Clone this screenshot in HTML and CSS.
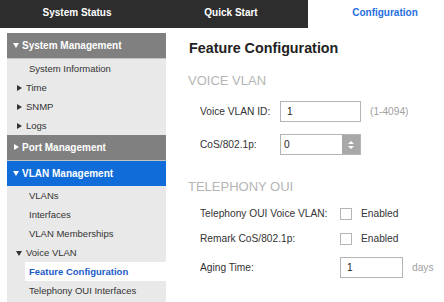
FILE: index.html
```html
<!DOCTYPE html>
<html lang="en">
<head>
  <meta charset="UTF-8">
  <title>Feature Configuration</title>
  <link rel="stylesheet" href="styles.css">
</head>
<body>
  <nav class="topbar">
    <div class="tab">System Status</div>
    <div class="tab">Quick Start</div>
    <div class="tab active">Configuration</div>
  </nav>
  <div class="main">
    <aside class="sidebar">
      <div class="group-head open">System Management</div>
      <ul class="items">
        <li class="leaf">System Information</li>
        <li class="branch">Time</li>
        <li class="branch">SNMP</li>
        <li class="branch">Logs</li>
      </ul>
      <div class="group-head">Port Management</div>
      <div class="group-head open selected">VLAN Management</div>
      <ul class="items">
        <li class="leaf">VLANs</li>
        <li class="leaf">Interfaces</li>
        <li class="leaf">VLAN Memberships</li>
        <li class="branch open">Voice VLAN</li>
        <li class="leaf current">Feature Configuration</li>
        <li class="leaf">Telephony OUI Interfaces</li>
      </ul>
    </aside>
    <section class="content">
      <h1>Feature Configuration</h1>

      <h2>VOICE VLAN</h2>
      <div class="form form-voice">
        <div class="row">
          <label>Voice VLAN ID:</label>
          <div class="textbox">1</div>
          <span class="hint">(1-4094)</span>
        </div>
        <div class="row">
          <label>CoS/802.1p:</label>
          <div class="select">
            <span class="value">0</span>
            <span class="spin">
              <svg width="8" height="12" viewBox="0 0 8 12"><path d="M1 5 L4 2 L7 5 Z M1 7 L4 10 L7 7 Z" fill="#fff"/></svg>
            </span>
          </div>
        </div>
      </div>

      <h2 class="second">TELEPHONY OUI</h2>
      <div class="form form-oui">
        <div class="row first">
          <label>Telephony OUI Voice VLAN:</label>
          <span class="check"></span>
          <span class="check-label">Enabled</span>
        </div>
        <div class="row tight">
          <label>Remark CoS/802.1p:</label>
          <span class="check"></span>
          <span class="check-label">Enabled</span>
        </div>
        <div class="row mid">
          <label>Aging Time:</label>
          <div class="textbox short">1</div>
          <span class="hint">days</span>
        </div>
      </div>
    </section>
  </div>
</body>
</html>
```

FILE: styles.css
```css
html, body {
  margin: 0;
  padding: 0;
  height: 100%;
  overflow: hidden;
  background: #fff;
  font-family: "Liberation Sans", Arial, sans-serif;
}
.topbar {
  display: flex;
  height: 28px;
  background: #2d2d2d;
  overflow: hidden;
}
.tab {
  flex: 0 0 154px;
  text-align: center;
  line-height: 25px;
  font-size: 10px;
  font-weight: bold;
  color: #fff;
}
.tab.active {
  background: #fff;
  color: #1f6fe0;
}
.main {
  display: flex;
  height: 274px;
}
.sidebar {
  width: 159px;
  margin: 5px 0 0 7px;
  background: #e9e9e9;
}
.group-head {
  position: relative;
  height: 25px;
  line-height: 25px;
  padding-left: 15px;
  background: #808080;
  border-bottom: 1px solid #c4c4c4;
  color: #fff;
  font-size: 10px;
  font-weight: bold;
}
.group-head::before {
  content: "";
  position: absolute;
  left: 6px;
  top: 10px;
  border-left: 3px solid transparent;
  border-right: 3px solid transparent;
  border-top: 5px solid #fff;
  display: none;
}
.group-head.open::before {
  display: block;
}
.group-head:not(.open)::after {
  content: "";
  position: absolute;
  left: 7px;
  top: 9px;
  border-top: 3px solid transparent;
  border-bottom: 3px solid transparent;
  border-left: 5px solid #fff;
}
.group-head.selected {
  background: #0f6cd8;
  border-bottom: none;
}
.items {
  list-style: none;
  margin: 0;
  padding: 0;
}
.items li {
  position: relative;
  height: 19px;
  line-height: 19px;
  font-size: 9.5px;
  color: #333;
}
.items .leaf {
  padding-left: 22px;
}
.items .branch {
  padding-left: 19px;
}
.items .branch::before {
  content: "";
  position: absolute;
  left: 10px;
  top: 7px;
  border-top: 3px solid transparent;
  border-bottom: 3px solid transparent;
  border-left: 5px solid #333;
}
.items .branch.open::before {
  left: 9px;
  top: 8px;
  border-left: 3px solid transparent;
  border-right: 3px solid transparent;
  border-top: 5px solid #333;
  border-bottom: none;
}
.items .current {
  margin-left: 18px;
  padding-left: 4px;
  background: #fff;
  color: #1b5cc8;
  font-weight: bold;
}
.content {
  flex: 1;
  padding: 12px 0 0 23px;
}
h1 {
  margin: 0;
  font-size: 14.3px;
  line-height: 17px;
  color: #222;
}
h2 {
  margin: 16px 0 0 -1px;
  font-size: 13px;
  line-height: 15px;
  font-weight: normal;
  color: #b5b5b5;
}
h2.second {
  margin-top: 24px;
}
.form {
  padding-left: 11px;
}
.row {
  display: flex;
  align-items: center;
  height: 21px;
  margin-top: 12px;
  font-size: 10.2px;
  color: #333;
}
.form-voice .row:first-child {
  margin-top: 13px;
}
.form-voice label {
  width: 80px;
}
.form-oui label {
  width: 140px;
}
.form-oui .row.first {
  margin-top: 9px;
}
.form-oui .row.tight {
  margin-top: 4px;
}
.form-oui .row.mid {
  margin-top: 8px;
}
.textbox {
  box-sizing: border-box;
  width: 81px;
  height: 21px;
  line-height: 19px;
  padding-left: 6px;
  border: 1px solid #b5b5b5;
  color: #222;
}
.textbox.short {
  width: 63px;
}
.hint {
  margin-left: 9px;
  color: #a0a0a0;
}
.select {
  box-sizing: border-box;
  display: flex;
  width: 81px;
  height: 21px;
  border: 1px solid #b5b5b5;
}
.select .value {
  flex: 1;
  line-height: 19px;
  padding-left: 3px;
  color: #222;
}
.select .spin {
  width: 18px;
  background: #a8a8a8;
  display: flex;
  align-items: center;
  justify-content: center;
}
.check {
  box-sizing: border-box;
  width: 12px;
  height: 12px;
  border: 1px solid #b5b5b5;
  background: #fff;
}
.check-label {
  margin-left: 9px;
  color: #333;
}
```
